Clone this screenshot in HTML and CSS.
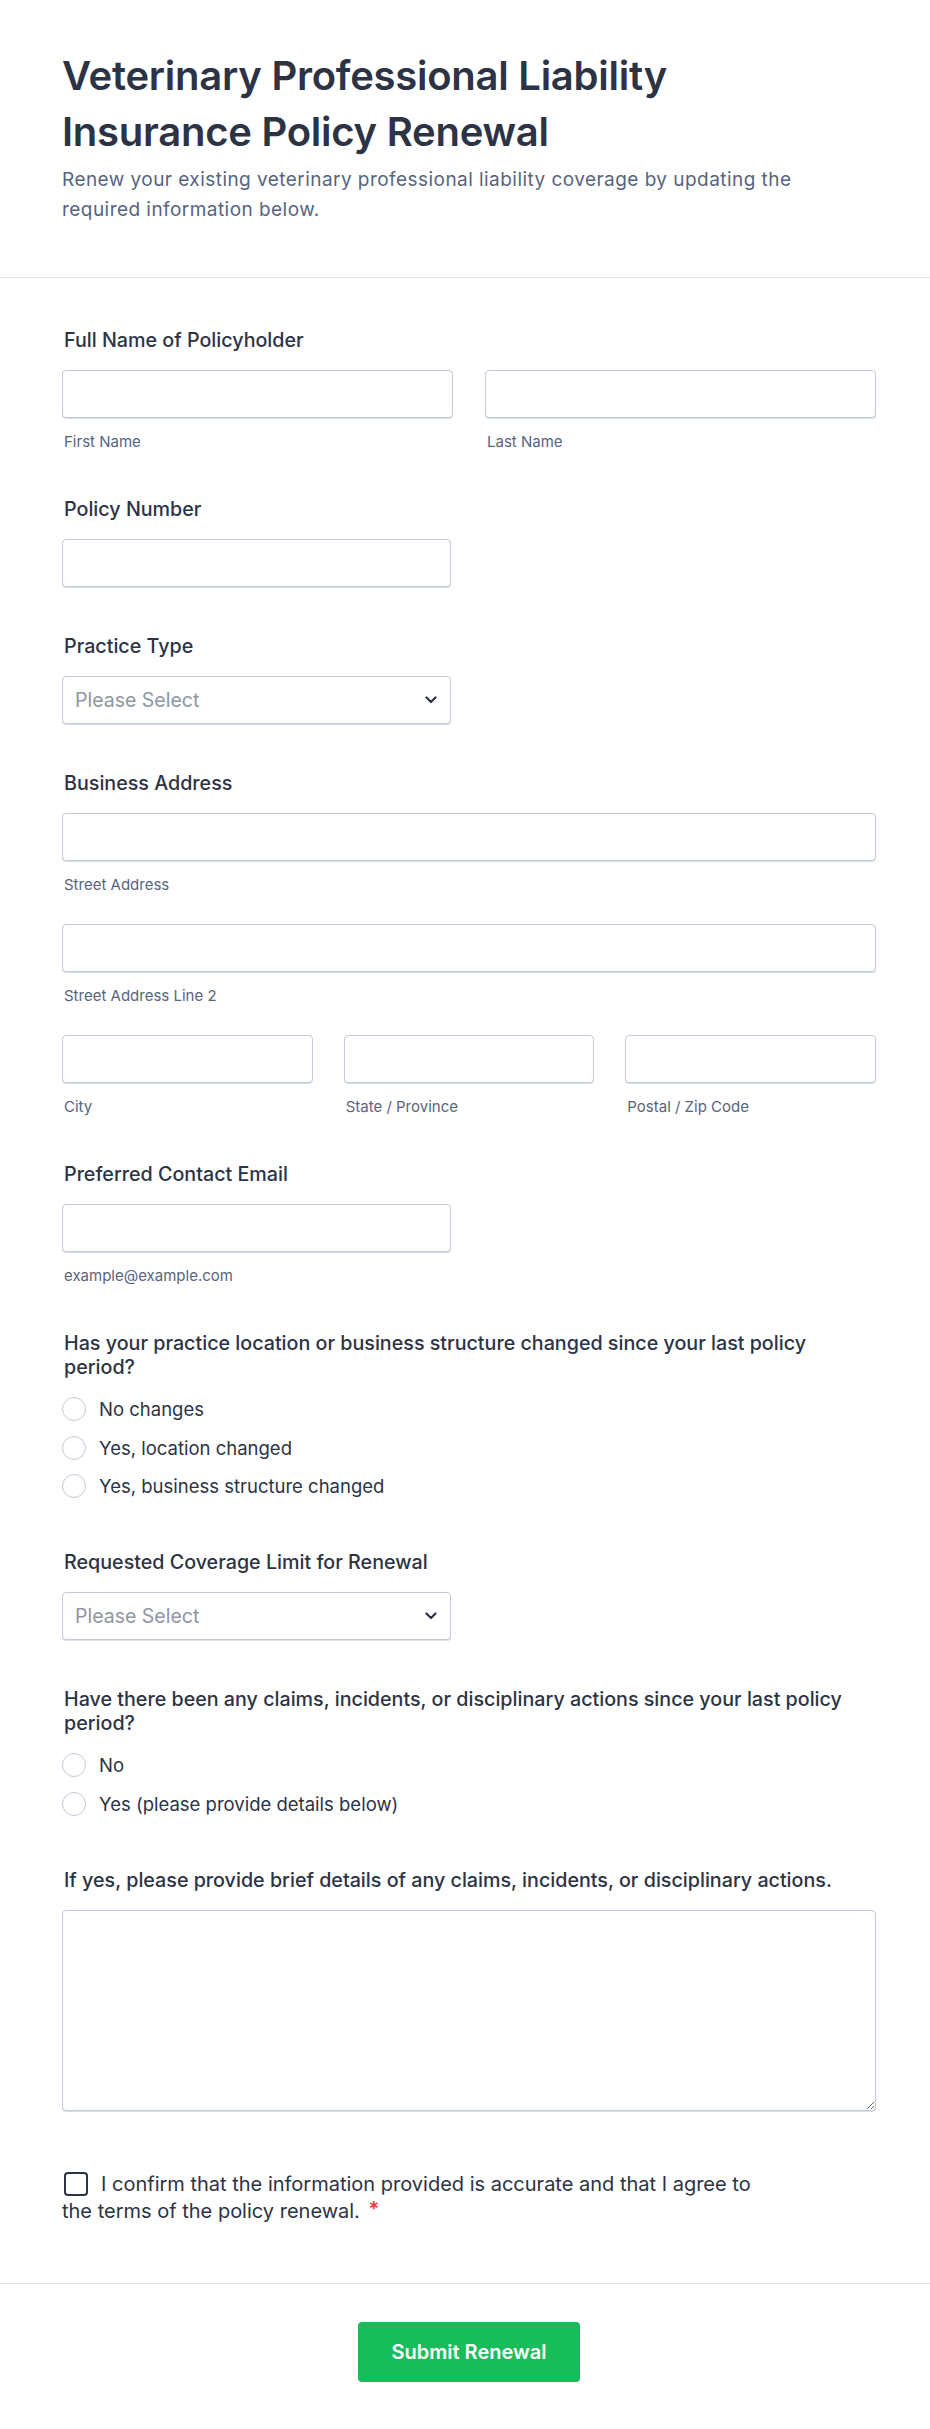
FILE: index.html
```html
<!DOCTYPE html>
<html lang="en">
<head>
<meta charset="utf-8">
<title>Veterinary Professional Liability Insurance Policy Renewal</title>
<link rel="stylesheet" href="styles.css">
</head>
<body>
<div class="page">
  <header class="header">
    <h1 class="title">Veterinary Professional Liability Insurance Policy Renewal</h1>
    <p class="subtitle">Renew your existing veterinary professional liability coverage by updating the required information below.</p>
  </header>

  <form class="form">
    <div class="field">
      <label class="label">Full Name of Policyholder</label>
      <div class="grid two">
        <div class="col"><input class="input" type="text"><span class="sublabel">First Name</span></div>
        <div class="col"><input class="input" type="text"><span class="sublabel">Last Name</span></div>
      </div>
    </div>

    <div class="field">
      <label class="label">Policy Number</label>
      <input class="input half" type="text">
    </div>

    <div class="field">
      <label class="label">Practice Type</label>
      <div class="select-wrap half">
        <select class="select">
          <option>Please Select</option>
        </select>
        <svg class="chevron" width="12" height="8" viewBox="0 0 12 8"><path d="M1.5 1.5 L6 6 L10.5 1.5" fill="none" stroke="#2c3345" stroke-width="2.2" stroke-linecap="round" stroke-linejoin="round"/></svg>
      </div>
    </div>

    <div class="field">
      <label class="label">Business Address</label>
      <div class="addr-row">
        <input class="input" type="text"><span class="sublabel">Street Address</span>
      </div>
      <div class="addr-row">
        <input class="input" type="text"><span class="sublabel">Street Address Line 2</span>
      </div>
      <div class="grid three">
        <div class="col"><input class="input" type="text"><span class="sublabel">City</span></div>
        <div class="col"><input class="input" type="text"><span class="sublabel">State / Province</span></div>
        <div class="col"><input class="input" type="text"><span class="sublabel">Postal / Zip Code</span></div>
      </div>
    </div>

    <div class="field">
      <label class="label">Preferred Contact Email</label>
      <div class="col half">
        <input class="input" type="email"><span class="sublabel">example@example.com</span>
      </div>
    </div>

    <div class="field">
      <label class="label">Has your practice location or business structure changed since your last policy period?</label>
      <div class="options">
        <label class="option"><input class="radio" type="radio" name="q1"><span class="option-text">No changes</span></label>
        <label class="option"><input class="radio" type="radio" name="q1"><span class="option-text">Yes, location changed</span></label>
        <label class="option"><input class="radio" type="radio" name="q1"><span class="option-text">Yes, business structure changed</span></label>
      </div>
    </div>

    <div class="field">
      <label class="label">Requested Coverage Limit for Renewal</label>
      <div class="select-wrap half">
        <select class="select">
          <option>Please Select</option>
        </select>
        <svg class="chevron" width="12" height="8" viewBox="0 0 12 8"><path d="M1.5 1.5 L6 6 L10.5 1.5" fill="none" stroke="#2c3345" stroke-width="2.2" stroke-linecap="round" stroke-linejoin="round"/></svg>
      </div>
    </div>

    <div class="field">
      <label class="label">Have there been any claims, incidents, or disciplinary actions since your last policy period?</label>
      <div class="options">
        <label class="option"><input class="radio" type="radio" name="q2"><span class="option-text">No</span></label>
        <label class="option"><input class="radio" type="radio" name="q2"><span class="option-text">Yes (please provide details below)</span></label>
      </div>
    </div>

    <div class="field">
      <label class="label">If yes, please provide brief details of any claims, incidents, or disciplinary actions.</label>
      <textarea class="textarea"></textarea>
    </div>

    <div class="field confirm-field">
      <label class="confirm"><input class="checkbox" type="checkbox">I confirm that the information provided is accurate and that I agree to the terms of the policy renewal. <span class="req">*</span></label>
    </div>
  </form>

  <footer class="footer">
    <button class="submit" type="button">Submit Renewal</button>
  </footer>
</div>
</body>
</html>
```

FILE: styles.css
```css
* {
  box-sizing: border-box;
}

html, body {
  margin: 0;
  padding: 0;
  background: #ffffff;
}

body {
  font-family: Inter, "Noto Sans", "Liberation Sans", sans-serif;
  color: #2c3345;
}

.page {
  width: 930px;
}

.header {
  padding: 48px 54px 52px 62px;
  border-bottom: 1px solid #e3e5ec;
}

.title {
  margin: 0;
  max-width: 770px;
  font-size: 40px;
  line-height: 56px;
  font-weight: 600;
  letter-spacing: -0.25px;
  color: #2c3345;
}

.subtitle {
  margin: 5px 0 0;
  max-width: 770px;
  font-size: 19px;
  line-height: 30px;
  letter-spacing: 0.45px;
  font-weight: 400;
  color: #57647e;
}

.form {
  padding: 50px 54px 58px 62px;
}

.field {
  margin-bottom: 47px;
}

.label {
  display: block;
  max-width: 790px;
  padding-left: 2px;
  font-size: 19.7px;
  line-height: 24px;
  font-weight: 500;
  color: #2c3345;
  margin-bottom: 18px;
}

.grid {
  display: grid;
}

.grid.two {
  grid-template-columns: 1fr 1fr;
  column-gap: 32px;
}

.grid.three {
  grid-template-columns: 1fr 1fr 1fr;
  column-gap: 31px;
}

.col {
  display: flex;
  flex-direction: column;
}

.half {
  width: 389px;
}

.input {
  display: block;
  width: 100%;
  height: 48px;
  border: 1px solid #c3cad8;
  border-radius: 4px;
  background: #ffffff;
  font-family: inherit;
  font-size: 16px;
  padding: 0 12px;
  box-shadow: 0 1px 0 rgba(195, 202, 216, 0.6);
}

.input.half {
  width: 389px;
}

.sublabel {
  display: block;
  margin-top: 15px;
  padding-left: 2px;
  font-size: 15px;
  line-height: 17px;
  color: #57647e;
}

.addr-row {
  display: flex;
  flex-direction: column;
  margin-bottom: 31px;
}

.select-wrap {
  position: relative;
}

.select {
  display: block;
  width: 100%;
  height: 48px;
  appearance: none;
  -webkit-appearance: none;
  border: 1px solid #c3cad8;
  border-radius: 4px;
  background: #ffffff;
  font-family: inherit;
  font-size: 19.5px;
  color: #8f96a3;
  padding: 0 40px 0 12px;
  box-shadow: 0 1px 0 rgba(195, 202, 216, 0.6);
}

.chevron {
  position: absolute;
  right: 14px;
  top: 20px;
  pointer-events: none;
}

.options {
  display: flex;
  flex-direction: column;
  gap: 14.5px;
  margin-top: 1px;
  padding-bottom: 5px;
}

.option {
  display: flex;
  align-items: center;
  gap: 13px;
  height: 24px;
  font-size: 18.5px;
  line-height: 22px;
  color: #2c3345;
}

.option-text {
  display: block;
}

.radio {
  appearance: none;
  -webkit-appearance: none;
  margin: 0;
  width: 24px;
  height: 24px;
  flex: 0 0 24px;
  border: 1px solid #c3cad8;
  border-radius: 50%;
  background: #ffffff;
}

.textarea {
  display: block;
  width: 100%;
  height: 201px;
  border: 1px solid #c3cad8;
  border-radius: 4px;
  background: #ffffff;
  font-family: inherit;
  font-size: 16px;
  padding: 10px 12px;
  box-shadow: 0 1px 0 rgba(195, 202, 216, 0.6);
}

.confirm-field {
  margin-top: 60px;
  margin-bottom: 0;
}

.confirm {
  display: block;
  max-width: 710px;
  font-size: 20px;
  line-height: 27px;
  color: #2c3345;
}

.checkbox {
  appearance: none;
  -webkit-appearance: none;
  display: inline-block;
  vertical-align: middle;
  width: 24px;
  height: 24px;
  margin: -3px 13px 0 2px;
  border: 2px solid #2c3345;
  border-radius: 4px;
  background: #ffffff;
}

.req {
  color: #f23a3c;
  font-weight: 600;
  vertical-align: top;
  line-height: 22px;
  margin-left: 3px;
}

.footer {
  border-top: 1px solid #e3e5ec;
  padding: 38px 54px 49px 62px;
  display: flex;
  justify-content: center;
}

.submit {
  width: 222px;
  height: 60px;
  border: none;
  border-radius: 4px;
  background: #18bd5b;
  color: #ffffff;
  font-family: inherit;
  font-size: 20px;
  font-weight: 600;
}
```
